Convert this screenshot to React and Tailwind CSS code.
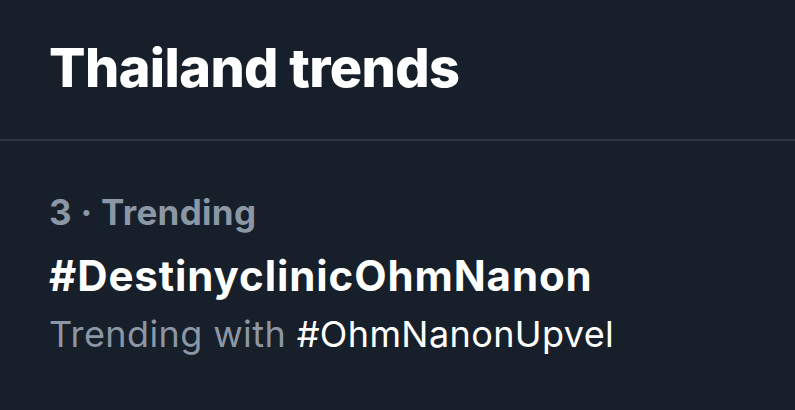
export default function App() {
  return (
    <div className="w-[795px] h-[410px] bg-[#171f2a] overflow-hidden" style={{ fontFamily: 'Inter, "Liberation Sans", sans-serif' }}>
      {/* header */}
      <div className="h-[139px] flex items-center px-[49px]">
        <h1 className="text-[54px] font-extrabold text-white tracking-[-0.6px] leading-none pb-[4px]">Thailand trends</h1>
      </div>
      <div className="h-[2px] bg-[#2f3741]" />

      {/* trend item */}
      <div className="px-[49px] pt-[49px]">
        <p className="text-[35px] font-bold text-[#8b97a4] leading-[44px] tracking-[0.3px]">3 · Trending</p>
        <p className="mt-[14px] text-[42px] font-bold text-white leading-[56px] tracking-[0.9px]">#DestinyclinicOhmNanon</p>
        <p className="mt-[6px] text-[36px] text-[#8b97a4] leading-[48px] tracking-[0.4px]">
          Trending with <span className="text-white">#OhmNanonUpvel</span>
        </p>
      </div>
    </div>
  );
}
